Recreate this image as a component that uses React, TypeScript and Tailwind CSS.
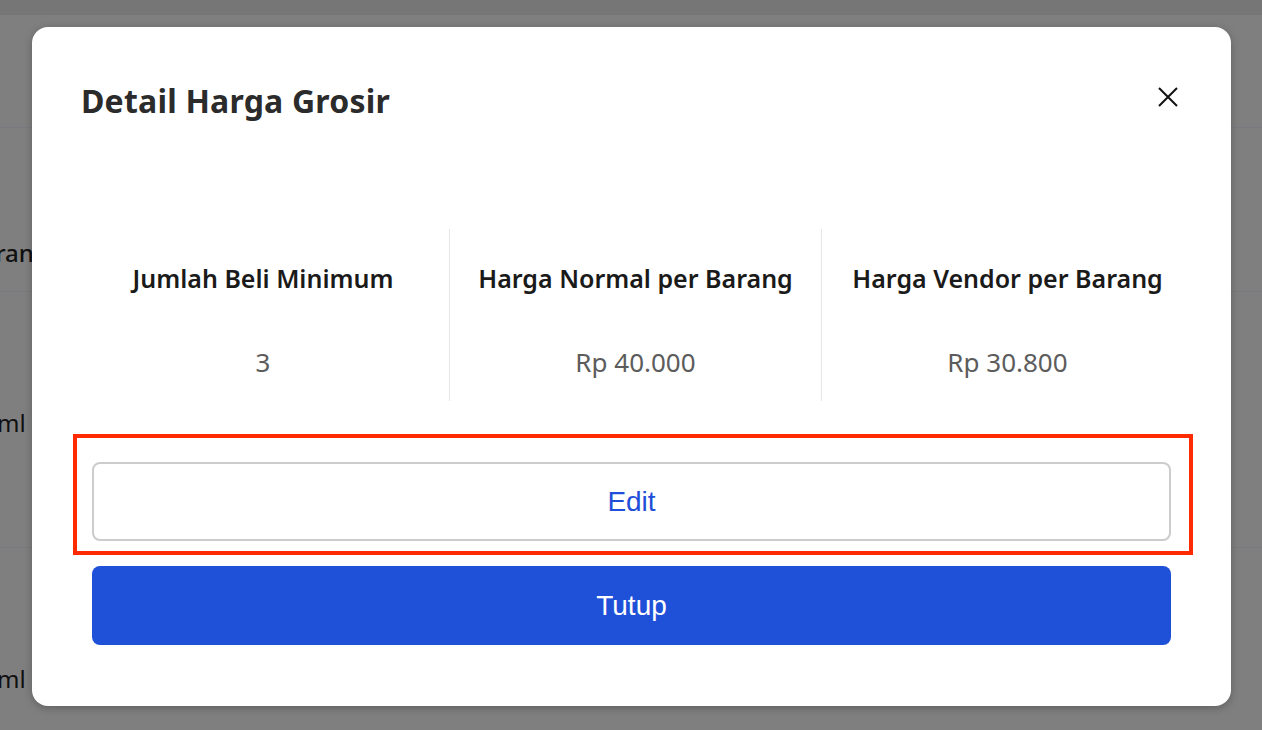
import React from "react";

const cols = [
  { label: "Jumlah Beli Minimum", value: "3" },
  { label: "Harga Normal per Barang", value: "Rp 40.000" },
  { label: "Harga Vendor per Barang", value: "Rp 30.800" },
];

const App = () => {
  return (
    <div className="relative w-[1262px] h-[730px] overflow-hidden bg-[#7f7f7f] font-['Noto_Sans',sans-serif]">
      {/* dimmed page behind the modal */}
      <div className="flex flex-col">
        <div className="h-[15px] bg-[#767676]" />
        <div className="h-[113px] border-b border-[#79797f]" />
        <div className="h-[164px] border-b border-[#79797f] flex items-end pb-[23px]">
          <p className="ml-[-34px] text-[24px] leading-[30px] font-medium text-[#101010]">Barang</p>
        </div>
        <div className="h-[256px] border-b border-[#79797f] pt-[116px]">
          <p className="ml-[-3px] text-[24px] leading-[30px] text-[#101010]">ml</p>
        </div>
        <div className="pt-[116px]">
          <p className="ml-[-3px] text-[24px] leading-[30px] text-[#101010]">ml</p>
        </div>
      </div>

      {/* modal */}
      <div className="absolute left-[32px] top-[27px] w-[1199px] h-[679px] rounded-2xl bg-white shadow-[0_2px_8px_rgba(0,0,0,0.25)]">
        <div className="flex items-center justify-between pt-[56px] pl-[49px] pr-[53px]">
          <h2 className="text-[32px] leading-[36px] font-bold tracking-[0.2px] text-[#2b2b2b]">Detail Harga Grosir</h2>
          <button className="w-[20px] h-[20px] -mt-[8px]">
            <svg viewBox="0 0 20 20" width="20" height="20" fill="none" stroke="#111" strokeWidth="2">
              <path d="M1 1L19 19M19 1L1 19" />
            </svg>
          </button>
        </div>

        <div className="mt-[110px] ml-[45px] w-[1116px] grid grid-cols-3">
          {cols.map((c, i) => (
            <div
              key={c.label}
              className={
                "flex flex-col items-center pt-[34px] pb-[24px] gap-[54px] " +
                (i > 0 ? "border-l border-[#e6e6e6]" : "")
              }
            >
              <p className="text-[25px] leading-[30px] font-semibold text-[#1a1a1a]">{c.label}</p>
              <p className="text-[26px] leading-[30px] text-[#5c5c5c]">{c.value}</p>
            </div>
          ))}
        </div>

        <div className="mt-[33px] ml-[41px] w-[1120px] h-[121px] border-4 border-[#ff2a00] pt-[24px] pl-[15px]">
          <button className="w-[1079px] h-[79px] rounded-lg border-2 border-[#cccccc] bg-white text-[28px] text-[#1f4fd8] font-['Liberation_Sans',Arial,sans-serif]">
            Edit
          </button>
        </div>

        <button className="mt-[11px] ml-[60px] w-[1079px] h-[79px] rounded-lg bg-[#1f50d8] text-[28px] text-white font-['Liberation_Sans',Arial,sans-serif]">
          Tutup
        </button>
      </div>
    </div>
  );
};

export default App;
